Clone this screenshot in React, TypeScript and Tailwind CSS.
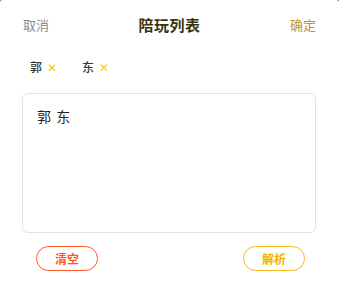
import React from "react";

export default function App() {
  const font = { fontFamily: '"Noto Sans CJK SC", "Noto Sans", sans-serif' };
  return (
    <div className="w-[339px] h-[284px] bg-[#8a8a8a]" style={font}>
      <div className="w-full h-full bg-white rounded-t-[3px] flex flex-col">
        <div className="h-12 flex items-center justify-between pl-[23px] pr-[23px]">
          <span className="text-[13px] text-[#8c8c8c] leading-none">取消</span>
          <span className="text-[15px] font-bold text-[#3b3212] leading-none tracking-[0.5px]">陪玩列表</span>
          <span className="text-[13px] text-[#b8952a] leading-none">确定</span>
        </div>
        <div className="mt-[9px] h-5 flex items-center pl-[30px]">
          <div className="flex items-center">
            <span className="text-[12px] font-medium text-[#333] leading-none">郭</span>
            <span className="ml-[5px] text-[12px] text-[#f7c82e] leading-none">✕</span>
          </div>
          <div className="flex items-center ml-[25px]">
            <span className="text-[12px] font-medium text-[#333] leading-none">东</span>
            <span className="ml-[5px] text-[12px] text-[#f7c82e] leading-none">✕</span>
          </div>
        </div>
        <div className="mt-4 ml-[22px] w-[294px] h-[140px] border border-[#e3e3e3] rounded-[6px] pt-[12px] pl-[14px] text-[14px] leading-5">
          <span className="text-[14px] text-[#222] tracking-[1px] leading-5">郭 东</span>
        </div>
        <div className="mt-[13px] flex justify-between pl-[36px] pr-[34px]">
          <button className="w-[62px] h-[25px] rounded-full border border-[#ff5a26] text-[#ff5a26] text-[12px] font-bold flex items-center justify-center">
            清空
          </button>
          <button className="w-[62px] h-[25px] rounded-full border border-[#f5bc1c] text-[#f2b200] text-[12px] font-bold flex items-center justify-center">
            解析
          </button>
        </div>
      </div>
    </div>
  );
}
